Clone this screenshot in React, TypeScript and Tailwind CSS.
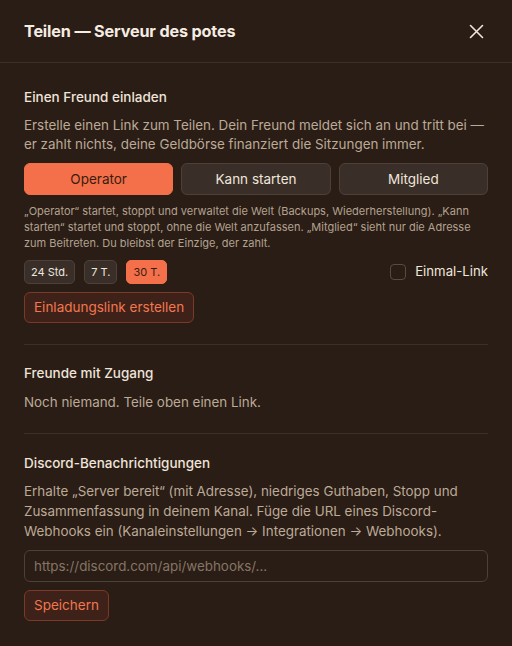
import { useState } from "react";

const roles = ["Operator", "Kann starten", "Mitglied"];
const durations = ["24 Std.", "7 T.", "30 T."];

export default function App() {
  const [role, setRole] = useState("Operator");
  const [duration, setDuration] = useState("30 T.");
  const [once, setOnce] = useState(false);
  const [webhook, setWebhook] = useState("");

  return (
    <div
      className="min-h-[646px] w-[512px] bg-[#2a1d15] text-[#eee4da]"
      style={{ fontFamily: "Inter, 'Noto Sans', sans-serif" }}
    >
      {/* header */}
      <div className="flex h-[63px] items-center justify-between border-b border-[#3d2f25] px-6">
        <h1 className="pt-[1px] text-[16.2px] font-bold tracking-[-0.01em] text-[#f5ece3]">
          Teilen — Serveur des potes
        </h1>
        <button className="flex h-6 w-6 items-center justify-center text-[#efe6dc]">
          <svg width="15" height="15" viewBox="0 0 15 15" fill="none" stroke="currentColor" strokeWidth="1.6" strokeLinecap="round">
            <path d="M1.5 1.5l12 12M13.5 1.5l-12 12" />
          </svg>
        </button>
      </div>

      <div className="px-6">
        {/* invite */}
        <section className="pt-[24px] pb-[21px]">
          <h2 className="text-[13.5px] font-medium leading-5 text-[#eee4da]">Einen Freund einladen</h2>
          <p className="mt-[9px] text-[13.4px] leading-[19px] text-[#bcaa98]">
            Erstelle einen Link zum Teilen. Dein Freund meldet sich an und tritt bei — er zahlt nichts, deine Geldbörse finanziert die Sitzungen immer.
          </p>

          <div className="mt-[9px] grid grid-cols-3 gap-2">
            {roles.map((r) => (
              <button
                key={r}
                onClick={() => setRole(r)}
                className={
                  r === role
                    ? "h-[32px] rounded-md border border-[#f4704a] bg-[#f4704a] text-[13.5px] text-[#3a1c0f]"
                    : "h-[32px] rounded-md border border-[#4d4038] bg-[#3a2f28] text-[13.5px] text-[#efe6dc]"
                }
              >
                {r}
              </button>
            ))}
          </div>

          <p className="mt-[8px] text-[11px] leading-4 text-[#b3a290]">
            „Operator“ startet, stoppt und verwaltet die Welt (Backups, Wiederherstellung). „Kann starten“ startet und stoppt, ohne die Welt anzufassen. „Mitglied“ sieht nur die Adresse zum Beitreten. Du bleibst der Einzige, der zahlt.
          </p>

          <div className="mt-[9px] flex items-center justify-between">
            <div className="flex gap-[9px]">
              {durations.map((d) => (
                <button
                  key={d}
                  onClick={() => setDuration(d)}
                  className={
                    d === duration
                      ? "h-6 rounded-[5px] border border-[#f4704a] bg-[#f4704a] px-[6px] text-[11px] text-[#3a1c0f]"
                      : "h-6 rounded-[5px] border border-[#4d4038] bg-[#3a2f28] px-[6px] text-[11px] text-[#efe6dc]"
                  }
                >
                  {d}
                </button>
              ))}
            </div>
            <label className="flex items-center gap-[9px] text-[13.2px] text-[#efe6dc]">
              <input
                type="checkbox"
                checked={once}
                onChange={(e) => setOnce(e.target.checked)}
                className="h-4 w-4 appearance-none rounded-[4px] border border-[#5a4b40] bg-[#2a1d15]"
              />
              Einmal-Link
            </label>
          </div>

          <button className="mt-[8px] h-[31px] rounded-md border border-[#7a3a25] bg-[#3e2219] px-[9px] text-[13.5px] text-[#f2774f]">
            Einladungslink erstellen
          </button>
        </section>

        {/* friends */}
        <section className="border-t border-[#3d2f25] pt-[18px] pb-[21px]">
          <h2 className="text-[13.5px] font-medium leading-5 text-[#eee4da]">Freunde mit Zugang</h2>
          <p className="mt-[10px] text-[13.4px] leading-[19px] text-[#bcaa98]">Noch niemand. Teile oben einen Link.</p>
        </section>

        {/* discord */}
        <section className="border-t border-[#3d2f25] pt-[19px]">
          <h2 className="text-[13.5px] font-medium leading-5 text-[#eee4da]">Discord-Benachrichtigungen</h2>
          <p className="mt-[8px] text-[13.4px] leading-[20px] text-[#bcaa98]">
            Erhalte „Server bereit“ (mit Adresse), niedriges Guthaben, Stopp und Zusammenfassung in deinem Kanal. Füge die URL eines Discord-Webhooks ein (Kanaleinstellungen → Integrationen → Webhooks).
          </p>
          <input
            value={webhook}
            onChange={(e) => setWebhook(e.target.value)}
            placeholder="https://discord.com/api/webhooks/..."
            className="mt-[9px] h-[32px] w-full rounded-md border border-[#4d4038] bg-[#2a1d15] px-[9px] text-[13.4px] text-[#efe6dc] placeholder:text-[#857565] focus:outline-none"
          />
          <button className="mt-[8px] block h-[31px] rounded-md border border-[#7a3a25] bg-[#3e2219] px-[9px] text-[13.5px] text-[#f2774f]">
            Speichern
          </button>
        </section>
      </div>
    </div>
  );
}
